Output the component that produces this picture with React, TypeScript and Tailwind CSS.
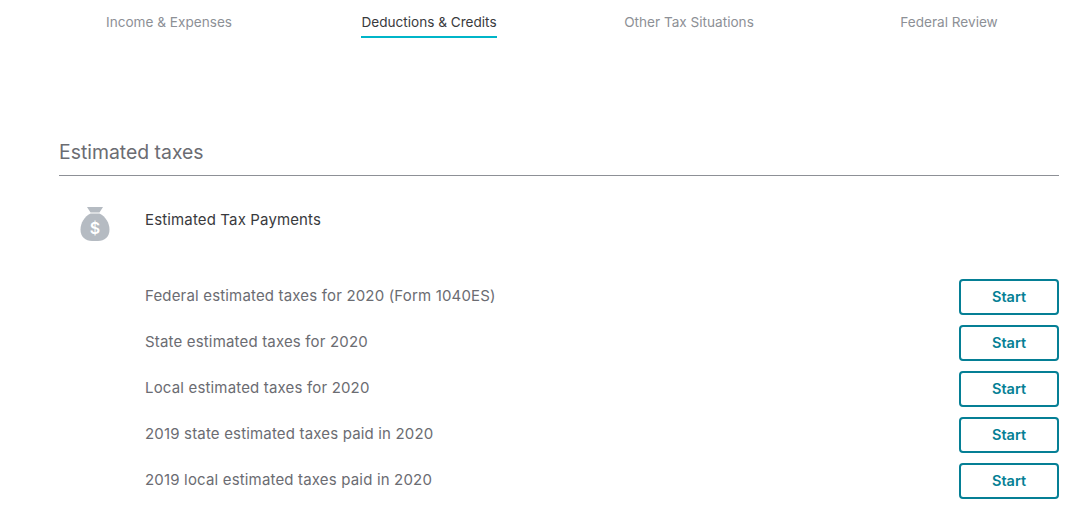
import React from 'react'

const tabs = [
  { label: 'Income & Expenses', active: false },
  { label: 'Deductions & Credits', active: true },
  { label: 'Other Tax Situations', active: false },
  { label: 'Federal Review', active: false },
]

const rows = [
  'Federal estimated taxes for 2020 (Form 1040ES)',
  'State estimated taxes for 2020',
  'Local estimated taxes for 2020',
  '2019 state estimated taxes paid in 2020',
  '2019 local estimated taxes paid in 2020',
]

function MoneyBag() {
  return (
    <svg width="30" height="36" viewBox="0 0 30 36" aria-hidden="true">
      <path d="M7 1h16l-3.5 5.5h-9z" fill="#b5bbc2" />
      <path
        d="M10.5 7.5h9C25.5 10.5 29.5 17 29.5 23.5 29.5 31 24.5 35 18 35h-6C5.5 35 .5 31 .5 23.5 .5 17 4.5 10.5 10.5 7.5z"
        fill="#b5bbc2"
      />
      <text
        x="15"
        y="27.5"
        textAnchor="middle"
        fontSize="16"
        fontWeight="600"
        fill="#ffffff"
        fontFamily="Inter, sans-serif"
      >
        $
      </text>
    </svg>
  )
}

export default function App() {
  return (
    <div className="h-[515px] w-[1091px] overflow-hidden bg-white font-['Inter',sans-serif]">
      <nav className="ml-[39px] grid w-[1040px] grid-cols-4 pt-[12px]">
        {tabs.map((tab) => (
          <div key={tab.label} className="flex justify-center">
            <div
              className={`h-[26px] border-b-2 text-[13.6px] leading-[20px] ${
                tab.active ? 'border-[#00b5c8] text-[#393a3d]' : 'border-transparent text-[#8d9096]'
              }`}
            >
              {tab.label}
            </div>
          </div>
        ))}
      </nav>

      <section className="ml-[59px] mt-[101px] w-[1000px]">
        <h2 className="border-b border-[#8d9096] pb-[10px] text-[19.4px] leading-[26px] text-[#6b6c72]">
          Estimated taxes
        </h2>

        <div className="mt-[34px] flex">
          <div className="ml-[21px] -mt-[4px] w-[65px]">
            <MoneyBag />
          </div>
          <div className="text-[15px] leading-[20px] tracking-[0.14px] text-[#393a3d]">
            Estimated Tax Payments
          </div>
        </div>

        <div className="mt-[37px] flex flex-col gap-[10px] pl-[86px]">
          {rows.map((row) => (
            <div key={row} className="flex h-[36px] items-center justify-between">
              <span className="-mt-[2px] text-[15px] leading-[20px] tracking-[0.17px] text-[#6b6c72]">
                {row}
              </span>
              <button className="h-[36px] w-[100px] rounded-[4px] border-2 border-[#057f95] text-[14.5px] font-semibold text-[#057f95]">
                Start
              </button>
            </div>
          ))}
        </div>
      </section>
    </div>
  )
}
